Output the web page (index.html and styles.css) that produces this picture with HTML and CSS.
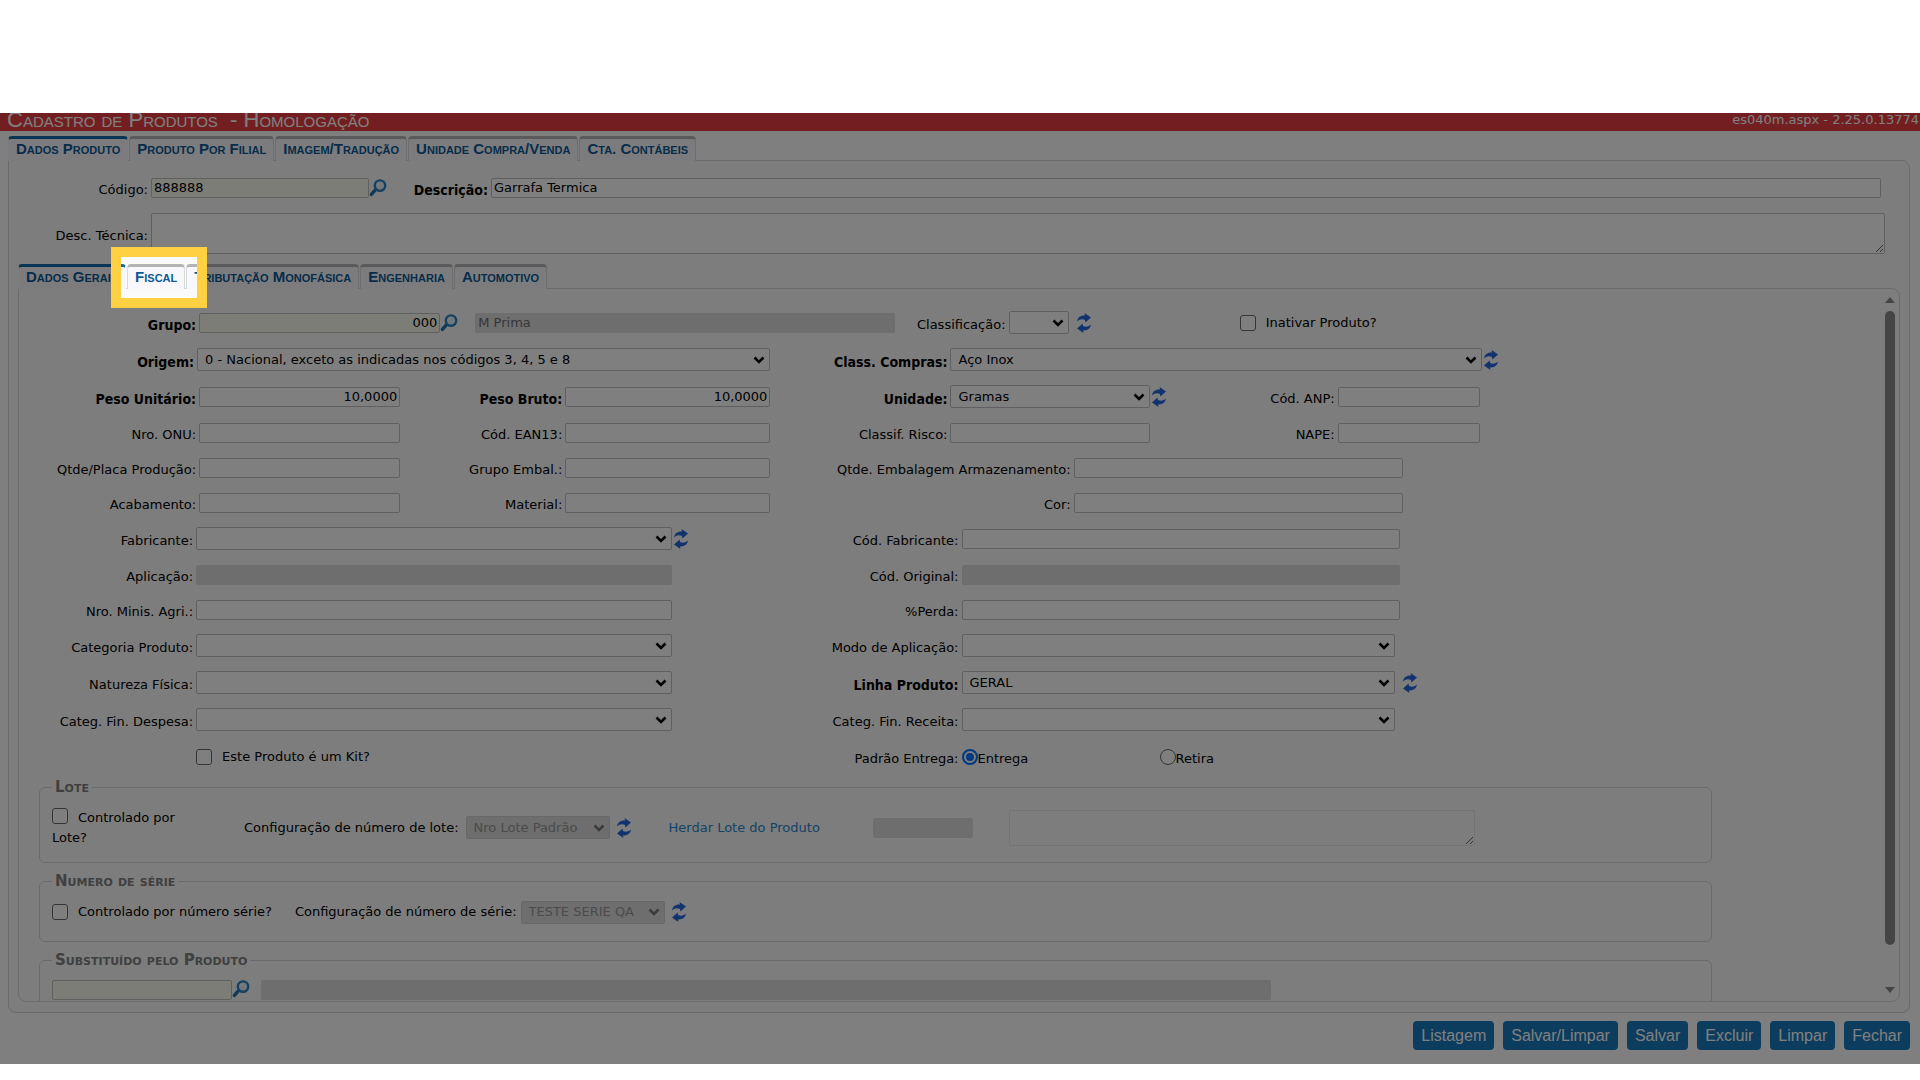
FILE: index.html
```html
<!DOCTYPE html>
<html lang="pt-BR">
<head>
<meta charset="utf-8">
<title>Cadastro de Produtos</title>
<link rel="stylesheet" href="styles.css">
</head>
<body>
<svg class="defs" width="0" height="0" aria-hidden="true">
  <symbol id="lupa" viewBox="0 0 18 18">
    <path d="M7 10.200 2.400 15.400" stroke="#1f74b4" stroke-width="3.400" stroke-linecap="round"/>
    <circle cx="11" cy="6.600" r="5.200" fill="#e4eef6" stroke="#2a82c4" stroke-width="2.400"/>
    <path d="M8.600 6a3 3 0 0 1 2.600-2.200" fill="none" stroke="#fff" stroke-width="1.200"/>
  </symbol>
  <symbol id="recarregar" viewBox="0 0 14 20">
    <path d="M0 8.500C0.600 4.500 3.500 2.200 8 2.600L7.600 0 14 4.600 8.400 9.600 8 7C5 5.800 2.500 6.300 0 8.500Z" fill="#2466dc"/>
    <path d="M14 11.500C13.400 15.500 10.500 17.800 6 17.400L6.400 20 0 15.400 5.600 10.400 6 13C9 14.200 11.500 13.700 14 11.500Z" fill="#2466dc"/>
  </symbol>
</svg>

<main class="stage">
  <header class="titlebar">
    <h1 class="title">Cadastro de Produtos &nbsp;- Homologação</h1>
    <span class="version">es040m.aspx - 2.25.0.13774</span>
  </header>

  <nav class="tabs">
    <button class="tab active">Dados Produto</button>
    <button class="tab">Produto Por Filial</button>
    <button class="tab">Imagem/Tradução</button>
    <button class="tab">Unidade Compra/Venda</button>
    <button class="tab">Cta. Contábeis</button>
  </nav>

  <section class="panel">
    <div class="head-row">
      <label for="codigo">Código:</label>
      <input id="codigo" class="code code-main" value="888888">
      <button class="icon search" aria-label="Pesquisar"><svg><use href="#lupa"/></svg></button>
      <label for="descricao" class="req">Descrição:</label>
      <input id="descricao" class="grow" value="Garrafa Termica">
    </div>
    <div class="tech-row">
      <label for="tecnica">Desc. Técnica:</label>
      <textarea id="tecnica" class="grow"></textarea>
    </div>

    <nav class="tabs inner">
      <button class="tab active">Dados Gerais</button>
      <button class="tab">Fiscal</button>
      <button class="tab">Tributação Monofásica</button>
      <button class="tab">Engenharia</button>
      <button class="tab">Automotivo</button>
      <span class="spotlight"></span>
    </nav>

    <div class="inner-panel">
      <div class="form">
        <div class="row tall g-grupo">
          <label for="grupo" class="req">Grupo:</label>
          <input id="grupo" class="code num" value="000">
          <button class="icon search" aria-label="Pesquisar grupo"><svg><use href="#lupa"/></svg></button>
          <input class="off" value="M Prima" aria-label="Nome do grupo" disabled>
          <label for="classificacao">Classificação:</label>
          <select id="classificacao"><option></option></select>
          <button class="icon refresh spaced" aria-label="Recarregar"><svg><use href="#recarregar"/></svg></button>
          <span class="check"><input type="checkbox" id="inativar"><label for="inativar">Inativar Produto?</label></span>
        </div>
        <div class="row tall g-origem">
          <label for="origem" class="req">Origem:</label>
          <select id="origem"><option>0 - Nacional, exceto as indicadas nos códigos 3, 4, 5 e 8</option></select>
          <label for="compras" class="req">Class. Compras:</label>
          <select id="compras"><option>Aço Inox</option></select>
          <button class="icon refresh" aria-label="Recarregar"><svg><use href="#recarregar"/></svg></button>
        </div>
        <div class="row tall g-peso">
          <label for="pesou" class="req">Peso Unitário:</label>
          <input id="pesou" class="num" value="10,0000">
          <label for="pesob" class="req">Peso Bruto:</label>
          <input id="pesob" class="num" value="10,0000">
          <label for="unidade" class="req">Unidade:</label>
          <select id="unidade"><option>Gramas</option></select>
          <button class="icon refresh" aria-label="Recarregar"><svg><use href="#recarregar"/></svg></button>
          <label for="anp">Cód. ANP:</label>
          <input id="anp">
        </div>
        <div class="row g-peso">
          <label for="onu">Nro. ONU:</label>
          <input id="onu">
          <label for="ean">Cód. EAN13:</label>
          <input id="ean">
          <label for="risco">Classif. Risco:</label>
          <input id="risco">
          <span></span>
          <label for="nape">NAPE:</label>
          <input id="nape">
        </div>
        <div class="row g-qtde">
          <label for="placa">Qtde/Placa Produção:</label>
          <input id="placa">
          <label for="embal">Grupo Embal.:</label>
          <input id="embal">
          <label for="armaz">Qtde. Embalagem Armazenamento:</label>
          <input id="armaz">
        </div>
        <div class="row g-qtde">
          <label for="acab">Acabamento:</label>
          <input id="acab">
          <label for="material">Material:</label>
          <input id="material">
          <label for="cor">Cor:</label>
          <input id="cor">
        </div>
        <div class="row tall g-wide">
          <label for="fabricante">Fabricante:</label>
          <select id="fabricante"><option></option></select>
          <button class="icon refresh" aria-label="Recarregar"><svg><use href="#recarregar"/></svg></button>
          <label for="codfab">Cód. Fabricante:</label>
          <input id="codfab">
        </div>
        <div class="row g-wide">
          <label for="aplicacao">Aplicação:</label>
          <input id="aplicacao" class="off" disabled>
          <span></span>
          <label for="original">Cód. Original:</label>
          <input id="original" class="off" disabled>
        </div>
        <div class="row g-wide">
          <label for="minis">Nro. Minis. Agri.:</label>
          <input id="minis">
          <span></span>
          <label for="perda">%Perda:</label>
          <input id="perda">
        </div>
        <div class="row tall g-list">
          <label for="categoria">Categoria Produto:</label>
          <select id="categoria"><option></option></select>
          <span></span>
          <label for="modo">Modo de Aplicação:</label>
          <select id="modo"><option></option></select>
        </div>
        <div class="row tall g-list">
          <label for="natureza">Natureza Física:</label>
          <select id="natureza"><option></option></select>
          <span></span>
          <label for="linha" class="req">Linha Produto:</label>
          <select id="linha"><option>GERAL</option></select>
          <button class="icon refresh spaced" aria-label="Recarregar"><svg><use href="#recarregar"/></svg></button>
        </div>
        <div class="row tall g-list">
          <label for="despesa">Categ. Fin. Despesa:</label>
          <select id="despesa"><option></option></select>
          <span></span>
          <label for="receita">Categ. Fin. Receita:</label>
          <select id="receita"><option></option></select>
        </div>
        <div class="row tall g-list">
          <span></span>
          <span class="check"><input type="checkbox" id="kit"><label for="kit">Este Produto é um Kit?</label></span>
          <span></span>
          <span class="caption">Padrão Entrega:</span>
          <span class="radios">
            <span class="radio"><input type="radio" name="entrega" id="entrega" checked><label for="entrega">Entrega</label></span>
            <span class="radio"><input type="radio" name="entrega" id="retira"><label for="retira">Retira</label></span>
          </span>
        </div>

        <fieldset class="group lote">
          <legend>Lote</legend>
          <div class="lote-check"><input type="checkbox" id="ctl-lote"><label for="ctl-lote">Controlado por Lote?</label></div>
          <label for="cfg-lote">Configuração de número de lote:</label>
          <select id="cfg-lote" class="cfg" disabled><option>Nro Lote Padrão</option></select>
          <button class="icon refresh" aria-label="Recarregar"><svg><use href="#recarregar"/></svg></button>
          <a href="#" class="inherit">Herdar Lote do Produto</a>
          <input class="off lote-code" aria-label="Lote" disabled>
          <textarea class="lote-notes" aria-label="Observação do lote" disabled></textarea>
        </fieldset>

        <fieldset class="group serie">
          <legend>Numero de série</legend>
          <span class="check"><input type="checkbox" id="ctl-serie"><label for="ctl-serie">Controlado por número série?</label></span>
          <label for="cfg-serie">Configuração de número de série:</label>
          <select id="cfg-serie" class="cfg" disabled><option>TESTE SERIE QA</option></select>
          <button class="icon refresh" aria-label="Recarregar"><svg><use href="#recarregar"/></svg></button>
        </fieldset>

        <fieldset class="group subst">
          <legend>Substituído pelo Produto</legend>
          <input class="code subst-code" aria-label="Código do substituto">
          <button class="icon search" aria-label="Pesquisar substituto"><svg><use href="#lupa"/></svg></button>
          <input class="off subst-name" aria-label="Nome do substituto" disabled>
        </fieldset>
      </div>
      <div class="scrollbar" aria-hidden="true">
        <span class="arrow up"></span>
        <span class="track"><span class="thumb"></span></span>
        <span class="arrow down"></span>
      </div>
    </div>
  </section>

  <footer class="actions">
    <button class="action">Listagem</button>
    <button class="action">Salvar/Limpar</button>
    <button class="action">Salvar</button>
    <button class="action">Excluir</button>
    <button class="action">Limpar</button>
    <button class="action">Fechar</button>
  </footer>
</main>
</body>
</html>
```
FILE: styles.css
```css
* { box-sizing: border-box; }

body {
  margin: 0;
  background: #fff;
  color: #000;
  font: 13px/20px "DejaVu Sans", Verdana, sans-serif;
}

.defs { position: absolute; }

.stage {
  margin-top: 113px;
  padding-bottom: 14px;
  overflow: hidden;
  background: #fff;
}

/* title bar */
.titlebar {
  display: flex;
  justify-content: space-between;
  height: 18px;
  padding: 0 1px 0 7px;
  background: #e63e42;
  color: #fff;
}
.title {
  margin: 0;
  font: 22px/13px "Liberation Sans", Arial, sans-serif;
  font-variant: small-caps;
}
.version { line-height: 14px; }

/* tabs */
.tabs {
  display: flex;
  gap: 1px;
  margin: 5px 8px 0;
}
.tab {
  height: 25px;
  padding: 0 7px 3px;
  border: 1px solid #d8dcd8;
  border-top: 3px solid #b4b4b4;
  border-bottom: 0;
  border-radius: 4px 4px 0 0;
  background: #f8f8fc;
  color: #0e5a94;
  font: bold 15px/18px "Liberation Sans", Arial, sans-serif;
  font-variant: small-caps;
  white-space: nowrap;
}
.tab.active {
  border-color: transparent;
  border-top-color: #1269a8;
}

/* outer panel */
.panel {
  margin: -1px 10px 0 8px;
  padding: 15px 9px 10px;
  border: 1px solid #d4d4d4;
  border-radius: 0 8px 8px 8px;
  background: #fafafa;
}
.head-row, .tech-row {
  display: flex;
  align-items: center;
}
.head-row { padding-right: 19px; }
.tech-row {
  margin-top: 13px;
  padding-right: 15px;
}
.head-row > label:first-child, .tech-row > label { width: 133px; }
.head-row > .req { width: 104px; }
.code-main { width: 218px; }
.grow { flex: 1; min-width: 0; }

label, .caption {
  padding: 4px 3px 0 0;
  text-align: right;
  white-space: nowrap;
}
.req { font: bold 14px/20px "DejaVu Sans Condensed", "DejaVu Sans", sans-serif; }

/* controls */
input, select, textarea {
  min-width: 0;
  margin: 0;
  border: 1px solid #c0c0c0;
  border-radius: 2px;
  background: #fff;
  color: #000;
  font: inherit;
}
input { height: 20px; padding: 0 2px; }
textarea { display: block; height: 41px; resize: vertical; }
select {
  height: 23px;
  padding: 0 22px 0 7px;
  appearance: none;
  background: #fff url("data:image/svg+xml,%3Csvg xmlns='http://www.w3.org/2000/svg' width='12' height='8'%3E%3Cpath d='M1.500 1.500 6 6 10.500 1.500' fill='none' stroke='%23000' stroke-width='2.600'/%3E%3C/svg%3E") no-repeat right 4px center;
}
.code { background: #fafaee; }
.num { text-align: right; }
.off {
  border-color: #dcdcdc;
  background: #dcdcdc;
  color: #6e6e6e;
}
select:disabled {
  border-color: #d0d0d0;
  background-color: #dcdcdc;
  background-image: url("data:image/svg+xml,%3Csvg xmlns='http://www.w3.org/2000/svg' width='12' height='8'%3E%3Cpath d='M1.500 1.500 6 6 10.500 1.500' fill='none' stroke='%23777' stroke-width='2.600'/%3E%3C/svg%3E");
  color: #969696;
  opacity: 1;
}
input[type="checkbox"], input[type="radio"] {
  flex: none;
  width: 16px;
  height: 16px;
  appearance: none;
  border: 1px solid #6c6c6c;
  border-radius: 3px;
}
input[type="radio"] { border-radius: 50%; }
input[type="radio"]:checked {
  padding: 2px;
  border: 2px solid #0075ff;
  background: #0075ff;
  background-clip: content-box;
}

.icon {
  display: flex;
  width: 18px;
  padding: 0;
  border: 0;
  background: none;
}
.icon svg { width: 18px; height: 18px; }
.refresh { justify-content: center; width: 18px; }
.refresh svg { width: 14px; height: 20px; }
.refresh.spaced { margin-left: 6px; }

/* highlighted tab */
.tabs.inner {
  position: relative;
  margin: 10px 0 0;
}
.spotlight {
  position: absolute;
  left: 93px;
  top: -17px;
  width: 96px;
  height: 61px;
  border: 10px solid #ffd042;
  box-shadow: 0 0 0 9999px rgba(0, 0, 0, .5);
  pointer-events: none;
}

/* inner panel */
.inner-panel {
  display: flex;
  height: 714px;
  margin-top: -1px;
  border: 1px solid #d4d8d4;
  border-radius: 0 8px 8px 8px;
  background: #fafafa;
  overflow: hidden;
}
.form { flex: 1; min-width: 0; padding-top: 15px; }
.row {
  display: grid;
  align-items: center;
  height: 35px;
}
.row.tall { height: 37px; }
.g-grupo { grid-template-columns: 180fr 241fr 35fr 420fr 113fr 60fr 171fr 645fr; }
.g-origem { grid-template-columns: 178fr 573fr 180fr 531fr 403fr; }
.g-peso { grid-template-columns: 180fr 201fr 165fr 205fr 180fr 199fr 23fr 165fr 142fr 405fr; }
.g-qtde { grid-template-columns: 180fr 201fr 165fr 205fr 303fr 329fr 482fr; }
.g-wide { grid-template-columns: 177fr 476fr 23fr 266fr 438fr 485fr; }
.g-list { grid-template-columns: 177fr 476fr 23fr 266fr 433fr 490fr; }

.check, .radio { display: flex; align-items: center; }
.check label { padding: 0 0 0 10px; }
.radios { display: flex; }
.radio { width: 198px; }
.radio label { padding: 4px 0 0; }

.group {
  display: flex;
  align-items: center;
  width: calc(100% - 193px);
  margin: 0 0 8px 20px;
  padding: 0 0 0 12px;
  border: 1px solid #d4d4d4;
  border-radius: 6px;
}
.group legend {
  padding: 0 3px;
  color: #808080;
  font-size: 15px;
  font-weight: bold;
  font-variant: small-caps;
}
.group label { padding-top: 0; }
.lote { height: 86px; margin-top: 2px; padding-bottom: 4px; }
.lote-check { width: 130px; margin-right: 62px; }
.lote-check input { vertical-align: -2px; }
.lote-check label { padding: 0 0 0 10px; white-space: normal; }
.cfg { width: 144px; margin: 0 5px 0 4px; }
.inherit { margin: 0 53px 0 36px; color: #2a86cc; text-decoration: none; }
.lote-code { width: 100px; margin-right: 36px; }
.lote-notes { width: 466px; height: 36px; border-color: #e8e8e8; background: #fafafa; }
.serie { height: 71px; padding-bottom: 8px; }
.serie .check { margin-right: 23px; }
.serie .cfg { margin-left: 1px; }
.subst { height: 80px; padding-top: 10px; align-items: flex-start; }
.subst-code { width: 180px; }
.subst-name { width: 1010px; margin-left: 11px; }

/* scrollbar */
.scrollbar {
  display: flex;
  flex-direction: column;
  width: 14px;
  padding: 8px 4px 8px 0;
}
.arrow { border: 5px solid transparent; }
.arrow.up { border-top: 0; border-bottom: 6px solid #8a8a8a; }
.arrow.down { border-bottom: 0; border-top: 6px solid #8a8a8a; }
.track { flex: 1; padding: 8px 0 42px; }
.thumb { display: block; height: 100%; border-radius: 5px; background: #8a8a8a; }

/* actions */
.actions {
  display: flex;
  justify-content: flex-end;
  gap: 9px;
  padding: 8px 10px 0;
}
.action {
  height: 29px;
  padding: 0 8px;
  border: 0;
  border-radius: 4px;
  background: #1878bc;
  color: #fff;
  font: 16px/29px "Liberation Sans", Arial, sans-serif;
}
```
